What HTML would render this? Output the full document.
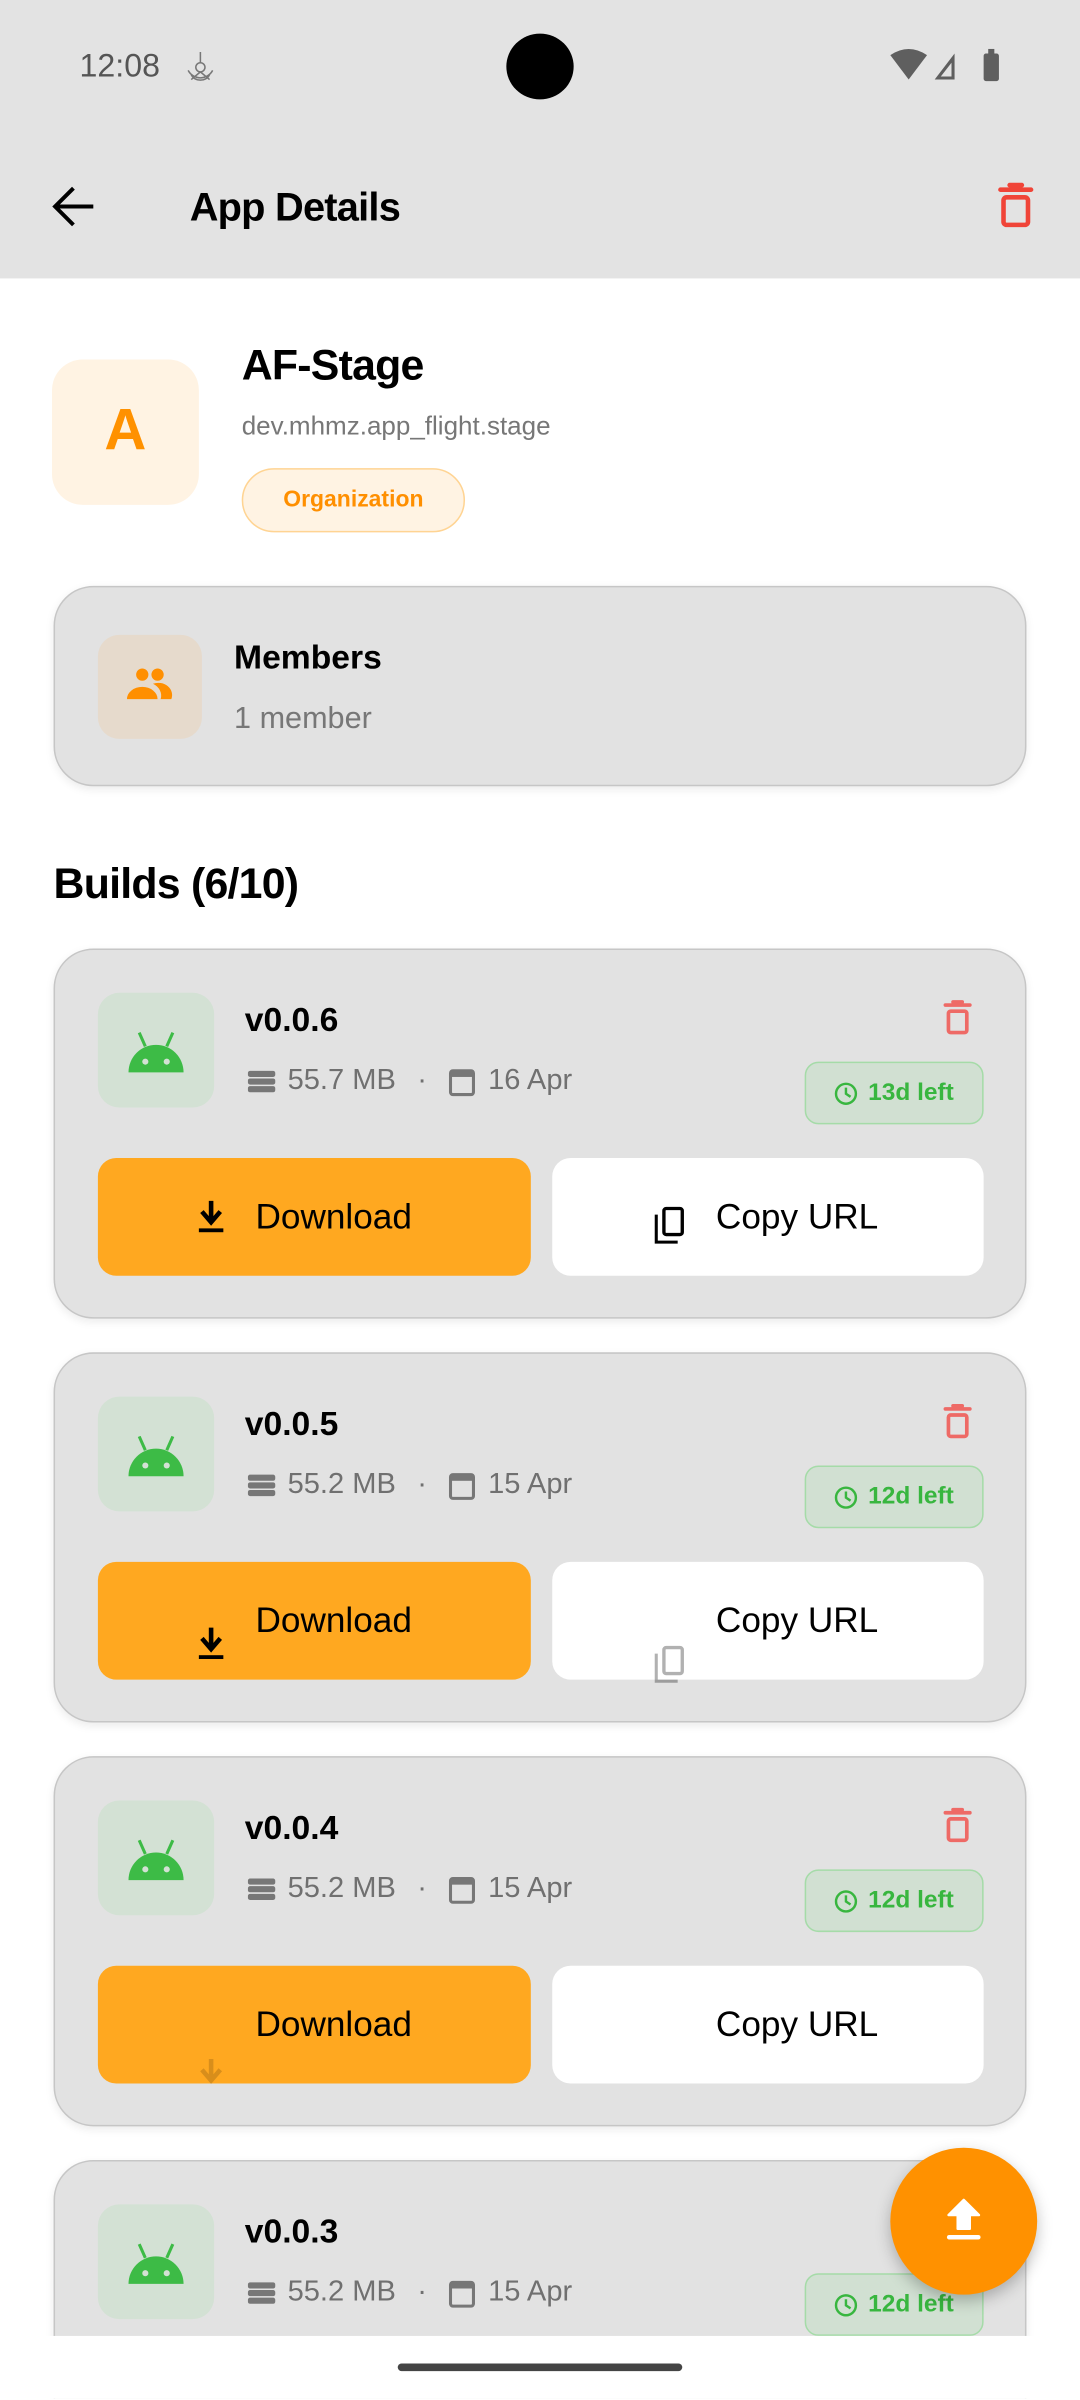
<!DOCTYPE html>
<html><head><meta charset="utf-8"><style>
*{box-sizing:border-box;margin:0;padding:0}
html,body{width:1080px;height:2400px;overflow:hidden;background:#fff}
#s{position:absolute;left:0;top:0;width:706px;height:1568px;transform:scale(1.52975);transform-origin:0 0;font-family:"Liberation Sans",sans-serif;background:#fff;overflow:hidden}
.a{position:absolute}
.card{position:absolute;left:35px;width:636px;height:242px;background:#e2e2e2;border:1.5px solid #c6c6c6;border-radius:26px;box-shadow:0 2px 6px rgba(0,0,0,.08)}
.ib{position:absolute;left:28px;top:28px;width:76px;height:75px;background:#d3e1d4;border-radius:14px}
.ver{position:absolute;left:124px;top:33px;font-size:22px;font-weight:bold;color:#000}
.meta{position:absolute;left:126px;top:75px;font-size:19px;color:#707070;display:flex;align-items:center;white-space:nowrap}
.badge{position:absolute;left:490px;top:73px;width:117px;height:41px;border:1.5px solid #a5dba8;background:#d1e0d2;border-radius:9px;color:#38b63f;font-weight:bold;font-size:16px;display:flex;align-items:center;justify-content:center;gap:6px}
.dl{position:absolute;left:28px;top:136px;width:283px;height:77px;background:#ffa820;border-radius:12px;font-size:23px;color:#000}
.cp{position:absolute;left:325px;top:136px;width:282px;height:77px;background:#fff;border-radius:12px;font-size:23px;color:#000}
.lbl{position:absolute;top:25px}
</style></head><body><div id="s">
<div class="a" style="left:0;top:0;width:706px;height:182px;background:#e3e3e3"></div>
<div class="a" style="left:52px;top:32px;font-size:21px;color:#555">12:08</div>
<svg class="a" style="left:118px;top:32px" width="26" height="24" viewBox="0 0 26 24"><g fill="none" stroke="#777" stroke-width="1"><circle cx="13" cy="12" r="3"/><path d="M13 9V2M13 15l-6 5M13 15l6 5M5 14a9 9 0 0 0 16 0M7 17a7 7 0 0 0 12 0"/></g></svg>
<div class="a" style="left:331px;top:22px;width:44px;height:43px;border-radius:50%;background:#000"></div>
<svg class="a" style="left:580px;top:30px" width="80" height="26" viewBox="0 0 80 26"><path d="M2 6Q14 -2 26 6L14 22Z" fill="#5f5f5f"/><path d="M31 22L44 5V22Z" fill="#5f5f5f"/><path d="M35 20L42 11V20Z" fill="#e3e3e3"/><rect x="63" y="5" width="10" height="18" rx="1.5" fill="#5f5f5f"/><rect x="66" y="2" width="4" height="4" fill="#5f5f5f"/></svg>
<svg class="a" style="left:32px;top:120px" width="32" height="30" viewBox="0 0 32 30"><path d="M29 15H4M16 3L4 15l12 12" fill="none" stroke="#000" stroke-width="2.6"/></svg>
<div class="a" style="left:124px;top:120px;font-size:26px;font-weight:bold;letter-spacing:-.5px">App Details</div>
<svg class="a" style="left:651px;top:118px" width="26" height="32" viewBox="0 0 26 32"><path d="M9 3h8M3 6h20" stroke="#f04438" stroke-width="3" stroke-linecap="round"/><rect x="5" y="11" width="16" height="18" rx="2" fill="none" stroke="#f04438" stroke-width="3"/></svg>

<div class="a" style="left:34px;top:235px;width:96px;height:95px;background:#fff3e3;border-radius:20px;color:#ff9100;font-size:38px;font-weight:bold;text-align:center;line-height:95px">A</div>
<div class="a" style="left:158px;top:223px;font-size:28px;font-weight:bold;letter-spacing:-.5px">AF-Stage</div>
<div class="a" style="left:158px;top:269px;font-size:17px;color:#777">dev.mhmz.app_flight.stage</div>
<div class="a" style="left:158px;top:306px;width:146px;height:42px;border:1.5px solid #ffd493;background:#fff3e3;border-radius:21px;color:#ff8f00;font-weight:bold;font-size:15px;text-align:center;line-height:39px">Organization</div>

<div class="card" style="top:383px;height:131px">
 <div class="a" style="left:28px;top:31px;width:68px;height:68px;background:#e6dacc;border-radius:14px"></div>
 <svg class="a" style="left:45px;top:51px" width="34" height="28" viewBox="0 0 34 28"><g fill="#ff8f00"><circle cx="12" cy="6" r="4"/><circle cx="22" cy="6" r="4"/><path d="M2 22a10 8 0 0 1 20 0z"/><path d="M19 12a9 8 0 0 1 12 10h-7a11 9 0 0 0-5-10z"/></g></svg>
 <div class="a" style="left:117px;top:33px;font-size:22px;font-weight:bold">Members</div>
 <div class="a" style="left:117px;top:75px;font-size:20px;color:#777">1 member</div>
</div>

<div class="a" style="left:35px;top:562px;font-size:28px;font-weight:bold;letter-spacing:-.5px">Builds (6/10)</div>

<div class="card" style="top:620px">
 <div class="ib"></div>
 <svg class="a" style="left:46px;top:50px" width="40" height="32" viewBox="0 0 40 32"><path d="M2 30a18 18 0 0 1 36 0z" fill="#3dbb46"/><path d="M9 4l4 9M31 4l-4 9" stroke="#3dbb46" stroke-width="2"/><circle cx="13" cy="23" r="2" fill="#d3e1d4"/><circle cx="27" cy="23" r="2" fill="#d3e1d4"/></svg>
 <div class="ver">v0.0.6</div>
 <svg class="a" style="left:580px;top:32px" width="20" height="24" viewBox="0 0 20 24"><path d="M7 2h6M2 4h16" stroke="#ee6a66" stroke-width="2.4" stroke-linecap="round"/><rect x="4" y="8" width="12" height="14" rx="1.5" fill="none" stroke="#ee6a66" stroke-width="2.4"/></svg>
 <div class="meta"><svg width="18" height="16" viewBox="0 0 18 16"><g fill="#777"><rect x="0" y="1" width="18" height="4" rx="1.5"/><rect x="0" y="6" width="18" height="4" rx="1.5"/><rect x="0" y="11" width="18" height="4" rx="1.5"/></g></svg><span style="margin-left:8px">55.7 MB</span><span style="margin:0 14px">·</span><svg width="18" height="20" viewBox="0 0 18 20"><rect x="1.5" y="3" width="15" height="15.5" rx="1.5" fill="none" stroke="#777" stroke-width="2"/><rect x="1.5" y="3" width="15" height="4" fill="#777"/></svg><span style="margin-left:8px">16 Apr</span></div>
 <div class="badge"><svg width="16" height="16" viewBox="0 0 16 16"><circle cx="8" cy="8" r="6.5" fill="none" stroke="#38b63f" stroke-width="1.6"/><path d="M8 4v4l3 2" fill="none" stroke="#38b63f" stroke-width="1.6"/></svg>13d left</div>
 <div class="dl"><svg class="a" style="left:63px;top:27px" width="22" height="24" viewBox="0 0 22 24"><path d="M11 1v12M5 8l6 7 6-7" fill="none" stroke="#000" stroke-width="3"/><rect x="3" y="19" width="16" height="2.5" fill="#000"/></svg><span class="lbl" style="left:103px">Download</span></div>
 <div class="cp"><svg class="a" style="left:66px;top:31px" width="24" height="26" viewBox="0 0 24 26"><path d="M2 6v18h14" fill="none" stroke="#000" stroke-width="2"/><rect x="7" y="2" width="12" height="17" rx="1.5" fill="none" stroke="#000" stroke-width="2.2"/></svg><span class="lbl" style="left:107px">Copy URL</span></div>
</div>

<div class="card" style="top:884px">
 <div class="ib"></div>
 <svg class="a" style="left:46px;top:50px" width="40" height="32" viewBox="0 0 40 32"><path d="M2 30a18 18 0 0 1 36 0z" fill="#3dbb46"/><path d="M9 4l4 9M31 4l-4 9" stroke="#3dbb46" stroke-width="2"/><circle cx="13" cy="23" r="2" fill="#d3e1d4"/><circle cx="27" cy="23" r="2" fill="#d3e1d4"/></svg>
 <div class="ver">v0.0.5</div>
 <svg class="a" style="left:580px;top:32px" width="20" height="24" viewBox="0 0 20 24"><path d="M7 2h6M2 4h16" stroke="#ee6a66" stroke-width="2.4" stroke-linecap="round"/><rect x="4" y="8" width="12" height="14" rx="1.5" fill="none" stroke="#ee6a66" stroke-width="2.4"/></svg>
 <div class="meta"><svg width="18" height="16" viewBox="0 0 18 16"><g fill="#777"><rect x="0" y="1" width="18" height="4" rx="1.5"/><rect x="0" y="6" width="18" height="4" rx="1.5"/><rect x="0" y="11" width="18" height="4" rx="1.5"/></g></svg><span style="margin-left:8px">55.2 MB</span><span style="margin:0 14px">·</span><svg width="18" height="20" viewBox="0 0 18 20"><rect x="1.5" y="3" width="15" height="15.5" rx="1.5" fill="none" stroke="#777" stroke-width="2"/><rect x="1.5" y="3" width="15" height="4" fill="#777"/></svg><span style="margin-left:8px">15 Apr</span></div>
 <div class="badge"><svg width="16" height="16" viewBox="0 0 16 16"><circle cx="8" cy="8" r="6.5" fill="none" stroke="#38b63f" stroke-width="1.6"/><path d="M8 4v4l3 2" fill="none" stroke="#38b63f" stroke-width="1.6"/></svg>12d left</div>
 <div class="dl"><svg class="a" style="left:63px;top:42px" width="22" height="24" viewBox="0 0 22 24"><path d="M11 1v12M5 8l6 7 6-7" fill="none" stroke="#000" stroke-width="3"/><rect x="3" y="19" width="16" height="2.5" fill="#000"/></svg><span class="lbl" style="left:103px">Download</span></div>
 <div class="cp"><svg class="a" style="left:66px;top:54px;opacity:.3" width="24" height="26" viewBox="0 0 24 26"><path d="M2 6v18h14" fill="none" stroke="#000" stroke-width="2"/><rect x="7" y="2" width="12" height="17" rx="1.5" fill="none" stroke="#000" stroke-width="2.2"/></svg><span class="lbl" style="left:107px">Copy URL</span></div>
</div>

<div class="card" style="top:1148px">
 <div class="ib"></div>
 <svg class="a" style="left:46px;top:50px" width="40" height="32" viewBox="0 0 40 32"><path d="M2 30a18 18 0 0 1 36 0z" fill="#3dbb46"/><path d="M9 4l4 9M31 4l-4 9" stroke="#3dbb46" stroke-width="2"/><circle cx="13" cy="23" r="2" fill="#d3e1d4"/><circle cx="27" cy="23" r="2" fill="#d3e1d4"/></svg>
 <div class="ver">v0.0.4</div>
 <svg class="a" style="left:580px;top:32px" width="20" height="24" viewBox="0 0 20 24"><path d="M7 2h6M2 4h16" stroke="#ee6a66" stroke-width="2.4" stroke-linecap="round"/><rect x="4" y="8" width="12" height="14" rx="1.5" fill="none" stroke="#ee6a66" stroke-width="2.4"/></svg>
 <div class="meta"><svg width="18" height="16" viewBox="0 0 18 16"><g fill="#777"><rect x="0" y="1" width="18" height="4" rx="1.5"/><rect x="0" y="6" width="18" height="4" rx="1.5"/><rect x="0" y="11" width="18" height="4" rx="1.5"/></g></svg><span style="margin-left:8px">55.2 MB</span><span style="margin:0 14px">·</span><svg width="18" height="20" viewBox="0 0 18 20"><rect x="1.5" y="3" width="15" height="15.5" rx="1.5" fill="none" stroke="#777" stroke-width="2"/><rect x="1.5" y="3" width="15" height="4" fill="#777"/></svg><span style="margin-left:8px">15 Apr</span></div>
 <div class="badge"><svg width="16" height="16" viewBox="0 0 16 16"><circle cx="8" cy="8" r="6.5" fill="none" stroke="#38b63f" stroke-width="1.6"/><path d="M8 4v4l3 2" fill="none" stroke="#38b63f" stroke-width="1.6"/></svg>12d left</div>
 <div class="dl"><svg class="a" style="left:63px;top:60px;opacity:.15" width="22" height="24" viewBox="0 0 22 24"><path d="M11 1v12M5 8l6 7 6-7" fill="none" stroke="#000" stroke-width="3"/></svg><span class="lbl" style="left:103px">Download</span></div>
 <div class="cp"><span class="lbl" style="left:107px">Copy URL</span></div>
</div>

<div class="card" style="top:1412px">
 <div class="ib"></div>
 <svg class="a" style="left:46px;top:50px" width="40" height="32" viewBox="0 0 40 32"><path d="M2 30a18 18 0 0 1 36 0z" fill="#3dbb46"/><path d="M9 4l4 9M31 4l-4 9" stroke="#3dbb46" stroke-width="2"/><circle cx="13" cy="23" r="2" fill="#d3e1d4"/><circle cx="27" cy="23" r="2" fill="#d3e1d4"/></svg>
 <div class="ver">v0.0.3</div>
 <div class="meta"><svg width="18" height="16" viewBox="0 0 18 16"><g fill="#777"><rect x="0" y="1" width="18" height="4" rx="1.5"/><rect x="0" y="6" width="18" height="4" rx="1.5"/><rect x="0" y="11" width="18" height="4" rx="1.5"/></g></svg><span style="margin-left:8px">55.2 MB</span><span style="margin:0 14px">·</span><svg width="18" height="20" viewBox="0 0 18 20"><rect x="1.5" y="3" width="15" height="15.5" rx="1.5" fill="none" stroke="#777" stroke-width="2"/><rect x="1.5" y="3" width="15" height="4" fill="#777"/></svg><span style="margin-left:8px">15 Apr</span></div>
 <div class="badge"><svg width="16" height="16" viewBox="0 0 16 16"><circle cx="8" cy="8" r="6.5" fill="none" stroke="#38b63f" stroke-width="1.6"/><path d="M8 4v4l3 2" fill="none" stroke="#38b63f" stroke-width="1.6"/></svg>12d left</div>
</div>

<div class="a" style="left:582px;top:1404px;width:96px;height:96px;border-radius:50%;background:#ff9100;box-shadow:0 4px 10px rgba(0,0,0,.25)"></div>
<svg class="a" style="left:616px;top:1436px" width="28" height="32" viewBox="0 0 28 32"><path d="M14 2L4 12h6v9h8v-9h6z" fill="#fff" stroke="#fff" stroke-linejoin="round" stroke-width="1.5"/><rect x="3" y="25" width="22" height="3" rx="1.5" fill="#fff"/></svg>

<div class="a" style="left:0;top:1527px;width:706px;height:41px;background:#fff"></div>
<div class="a" style="left:260px;top:1545px;width:186px;height:5px;border-radius:3px;background:#444"></div>
</div></body></html>
